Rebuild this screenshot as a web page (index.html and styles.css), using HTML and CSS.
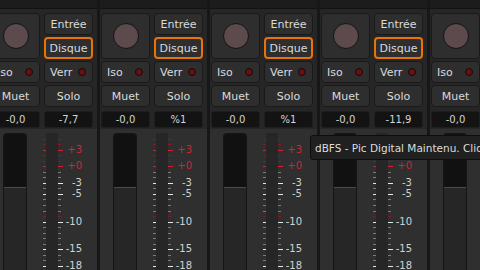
FILE: index.html
```html
<!DOCTYPE html>
<html>
<head>
  <meta charset="utf-8">
  <link rel="stylesheet" href="styles.css">
</head>
<body>
  <div class="mixer">
    <div class="strip">
      <div class="strip-top"></div>
      <div class="controls">
        <div class="rec-box"><span class="rec-dot"></span></div>
        <div class="btn">Entrée</div>
        <div class="btn active">Disque</div>
        <div class="btn led-btn">Iso<span class="led"></span></div>
        <div class="btn led-btn">Verr<span class="led"></span></div>
        <div class="btn">Muet</div>
        <div class="btn">Solo</div>
        <div class="readout">-0,0</div>
        <div class="readout">-7,7</div>
      </div>
      <div class="gain">
        <div class="fader"><div class="fader-level"></div></div>
        <div class="scale"></div>
      </div>
    </div>

    <div class="strip">
      <div class="strip-top"></div>
      <div class="controls">
        <div class="rec-box"><span class="rec-dot"></span></div>
        <div class="btn">Entrée</div>
        <div class="btn active">Disque</div>
        <div class="btn led-btn">Iso<span class="led"></span></div>
        <div class="btn led-btn">Verr<span class="led"></span></div>
        <div class="btn">Muet</div>
        <div class="btn">Solo</div>
        <div class="readout">-0,0</div>
        <div class="readout">%1</div>
      </div>
      <div class="gain">
        <div class="fader"><div class="fader-level"></div></div>
        <div class="scale"></div>
      </div>
    </div>

    <div class="strip">
      <div class="strip-top"></div>
      <div class="controls">
        <div class="rec-box"><span class="rec-dot"></span></div>
        <div class="btn">Entrée</div>
        <div class="btn active">Disque</div>
        <div class="btn led-btn">Iso<span class="led"></span></div>
        <div class="btn led-btn">Verr<span class="led"></span></div>
        <div class="btn">Muet</div>
        <div class="btn">Solo</div>
        <div class="readout">-0,0</div>
        <div class="readout">%1</div>
      </div>
      <div class="gain">
        <div class="fader"><div class="fader-level"></div></div>
        <div class="scale"></div>
      </div>
    </div>

    <div class="strip">
      <div class="strip-top"></div>
      <div class="controls">
        <div class="rec-box"><span class="rec-dot"></span></div>
        <div class="btn">Entrée</div>
        <div class="btn active">Disque</div>
        <div class="btn led-btn">Iso<span class="led"></span></div>
        <div class="btn led-btn">Verr<span class="led"></span></div>
        <div class="btn">Muet</div>
        <div class="btn">Solo</div>
        <div class="readout">-0,0</div>
        <div class="readout">-11,9</div>
      </div>
      <div class="gain">
        <div class="fader"><div class="fader-level"></div></div>
        <div class="scale"></div>
      </div>
    </div>

    <div class="strip">
      <div class="strip-top"></div>
      <div class="controls">
        <div class="rec-box"><span class="rec-dot"></span></div>
        <div class="btn">Entrée</div>
        <div class="btn active">Disque</div>
        <div class="btn led-btn">Iso<span class="led"></span></div>
        <div class="btn led-btn">Verr<span class="led"></span></div>
        <div class="btn">Muet</div>
        <div class="btn">Solo</div>
        <div class="readout">-0,0</div>
        <div class="readout"></div>
      </div>
      <div class="gain">
        <div class="fader"><div class="fader-level"></div></div>
        <div class="scale"></div>
      </div>
    </div>
  </div>

  <div class="tooltip">dBFS - Pic Digital Maintenu. Cliquer pour réinitialiser</div>

  <script src="meter.js"></script>
</body>
</html>
```

FILE: styles.css
```css
* {
  margin: 0;
  padding: 0;
  box-sizing: border-box;
}

body {
  width: 480px;
  height: 270px;
  overflow: hidden;
  background: #171717;
  font-family: "DejaVu Sans", sans-serif;
  position: relative;
}

.mixer {
  display: flex;
  gap: 3px;
  margin-left: -10px;
  height: 100%;
}

.strip {
  flex: 0 0 107px;
  display: flex;
  flex-direction: column;
  background: #262626;
  padding: 0 4px 0 1px;
}

.strip-top {
  height: 9px;
  margin: 0 -4px 0 -1px;
  background: #1c1c1c;
  border-bottom: 1px solid #121212;
  flex-shrink: 0;
}

.controls {
  display: grid;
  grid-template-columns: 49px 49px;
  grid-template-rows: 22px 22px 22px 22px 17px;
  column-gap: 4px;
  row-gap: 2px;
  margin-top: 4px;
}

.rec-box {
  grid-row: 1 / span 2;
  display: flex;
  align-items: center;
  justify-content: center;
  background: #2e2e2e;
  border: 1px solid #1a1a1a;
  border-radius: 4px;
}

.rec-dot {
  width: 26px;
  height: 26px;
  border-radius: 50%;
  background: #5c4a4d;
  border: 1px solid #141414;
}

.btn {
  display: flex;
  align-items: center;
  justify-content: center;
  background: #2e2e2e;
  border: 1px solid #1a1a1a;
  border-radius: 4px;
  color: #dadada;
  font-size: 11px;
  white-space: nowrap;
}

.btn.active {
  border: 2px solid #e57409;
}

.led-btn {
  justify-content: space-between;
  padding: 0 6px 0 5px;
}

.led {
  width: 8px;
  height: 8px;
  border-radius: 50%;
  background: #6a1010;
  border: 1px solid #0c0c0c;
}

.readout {
  margin-top: 2px;
  height: 17px;
  display: flex;
  align-items: center;
  justify-content: center;
  background: #131313;
  border: 1px solid #1e1e1e;
  border-radius: 3px;
  color: #d4d4d4;
  font-size: 10px;
}

.gain {
  flex: 1;
  display: flex;
  margin: 3px -4px 0 -1px;
  padding: 4px 0 0 13px;
  background: #2f2f2f;
}

.fader {
  width: 24px;
  display: flex;
  flex-direction: column;
  background: #262626;
  border: 1px solid #151515;
  border-bottom: 0;
  border-radius: 4px 4px 0 0;
  overflow: hidden;
}

.fader::before {
  content: '';
  height: 53px;
  background: #111;
  border-bottom: 1px solid #4a4a4a;
}

.fader-level {
  flex: 1;
}

.scale {
  position: relative;
  width: 43px;
  margin-left: 15px;
}

.scale::before {
  content: '';
  position: absolute;
  top: 0;
  bottom: 0;
  left: 4px;
  width: 12px;
  background: #262626;
}

.tick {
  position: absolute;
  left: 0;
  width: 100%;
  height: 1px;
}

.tick::before,
.tick::after {
  content: '';
  position: absolute;
  top: 0;
  height: 1px;
  width: 3px;
  background: #7c7c7c;
}

.tick::before {
  left: 1px;
}

.tick::after {
  left: 16px;
}

.tick.long::before,
.tick.long::after {
  background: #e6e6e6;
}

.tick.long::after {
  width: 5px;
}

.tick.red::before,
.tick.red::after {
  background: #861a24;
}

.tick.red.long::before,
.tick.red.long::after {
  background: #cc2232;
}

.scale-label {
  position: absolute;
  right: 3px;
  height: 12px;
  line-height: 12px;
  font-size: 10px;
  color: #d2d2d2;
}

.scale-label.red {
  color: #c8283a;
}

.tooltip {
  position: absolute;
  left: 310px;
  top: 135px;
  height: 25px;
  padding: 0 4px;
  display: flex;
  align-items: center;
  background: #202020;
  border: 1px solid #0e0e0e;
  border-radius: 3px;
  color: #dcdcdc;
  font-size: 10.5px;
  white-space: nowrap;
}
```

FILE: meter.js
```js
// dB marks on the meter scale, 0 dB sits 33px below the top of the scale
var PX_PER_DB = 5.53;
var ZERO_Y = 33.3;
var LABELS = { 3: '+3', 0: '+0', '-3': '-3', '-5': '-5', '-10': '-10', '-15': '-15', '-18': '-18' };

document.querySelectorAll('.scale').forEach(function (scale) {
  for (var db = 5; db >= -18; db--) {
    var y = Math.round(ZERO_Y - PX_PER_DB * db);
    var tick = document.createElement('div');
    tick.className = 'tick';
    if (db >= 0 || db === -9) tick.className += ' red';
    if (LABELS[db]) tick.className += ' long';
    tick.style.top = y + 'px';
    scale.appendChild(tick);

    if (LABELS[db]) {
      var label = document.createElement('span');
      label.className = 'scale-label' + (db >= 0 ? ' red' : '');
      label.textContent = LABELS[db];
      label.style.top = (y - 6) + 'px';
      scale.appendChild(label);
    }
  }
});
```
